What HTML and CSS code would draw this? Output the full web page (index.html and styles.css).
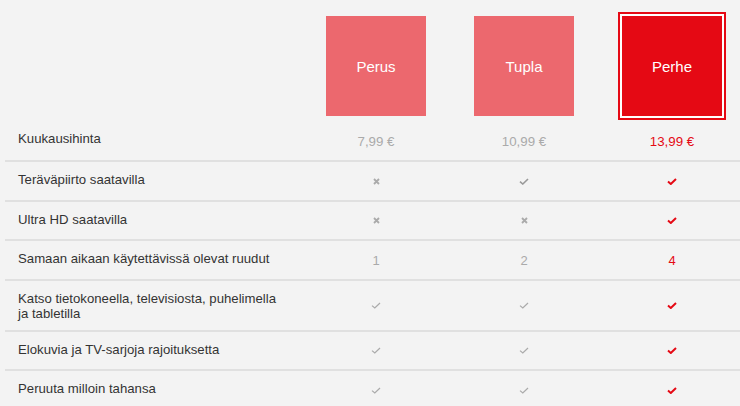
FILE: index.html
```html
<!DOCTYPE html>
<html lang="fi">
<head>
<meta charset="utf-8">
<title>Tilaukset</title>
<link rel="stylesheet" href="styles.css">
</head>
<body>
<div class="plans">
  <div class="row head">
    <div class="cell"></div>
    <div class="cell"><div class="plan">Perus</div></div>
    <div class="cell"><div class="plan">Tupla</div></div>
    <div class="cell"><div class="plan selected">Perhe</div></div>
  </div>
  <div class="row price">
    <div class="label">Kuukausihinta</div>
    <div class="val">7,99 €</div>
    <div class="val">10,99 €</div>
    <div class="val on">13,99 €</div>
  </div>
  <div class="row feature">
    <div class="label">Teräväpiirto saatavilla</div>
    <div class="val"><svg class="x" width="7" height="7" viewBox="0 0 7 7"><path d="M1 1L6 6M6 1L1 6"/></svg></div>
    <div class="val"><svg class="ck" width="10" height="7" viewBox="0 0 10 7"><path d="M1 3.6L3.8 6L9 1"/></svg></div>
    <div class="val on"><svg class="ck" width="10" height="7" viewBox="0 0 10 7"><path d="M1 3.6L3.8 6L9 1"/></svg></div>
  </div>
  <div class="row feature">
    <div class="label">Ultra HD saatavilla</div>
    <div class="val"><svg class="x" width="7" height="7" viewBox="0 0 7 7"><path d="M1 1L6 6M6 1L1 6"/></svg></div>
    <div class="val"><svg class="x" width="7" height="7" viewBox="0 0 7 7"><path d="M1 1L6 6M6 1L1 6"/></svg></div>
    <div class="val on"><svg class="ck" width="10" height="7" viewBox="0 0 10 7"><path d="M1 3.6L3.8 6L9 1"/></svg></div>
  </div>
  <div class="row feature">
    <div class="label">Samaan aikaan käytettävissä olevat ruudut</div>
    <div class="val">1</div>
    <div class="val">2</div>
    <div class="val on">4</div>
  </div>
  <div class="row feature">
    <div class="label">Katso tietokoneella, televisiosta, puhelimella ja tabletilla</div>
    <div class="val"><svg class="ck thin" width="10" height="7" viewBox="0 0 10 7"><path d="M1 3.6L3.8 6L9 1"/></svg></div>
    <div class="val"><svg class="ck thin" width="10" height="7" viewBox="0 0 10 7"><path d="M1 3.6L3.8 6L9 1"/></svg></div>
    <div class="val on"><svg class="ck" width="10" height="7" viewBox="0 0 10 7"><path d="M1 3.6L3.8 6L9 1"/></svg></div>
  </div>
  <div class="row feature">
    <div class="label">Elokuvia ja TV-sarjoja rajoituksetta</div>
    <div class="val"><svg class="ck thin" width="10" height="7" viewBox="0 0 10 7"><path d="M1 3.6L3.8 6L9 1"/></svg></div>
    <div class="val"><svg class="ck thin" width="10" height="7" viewBox="0 0 10 7"><path d="M1 3.6L3.8 6L9 1"/></svg></div>
    <div class="val on"><svg class="ck" width="10" height="7" viewBox="0 0 10 7"><path d="M1 3.6L3.8 6L9 1"/></svg></div>
  </div>
  <div class="row feature">
    <div class="label">Peruuta milloin tahansa</div>
    <div class="val"><svg class="ck thin" width="10" height="7" viewBox="0 0 10 7"><path d="M1 3.6L3.8 6L9 1"/></svg></div>
    <div class="val"><svg class="ck thin" width="10" height="7" viewBox="0 0 10 7"><path d="M1 3.6L3.8 6L9 1"/></svg></div>
    <div class="val on"><svg class="ck" width="10" height="7" viewBox="0 0 10 7"><path d="M1 3.6L3.8 6L9 1"/></svg></div>
  </div>
</div>
</body>
</html>
```
FILE: styles.css
```css
html, body {
  margin: 0;
  background: #f3f3f3;
  overflow: hidden;
}
body {
  font-family: "Liberation Sans", Arial, sans-serif;
}
.plans {
  margin-left: 5px;
  width: 741px;
}
.row {
  display: grid;
  grid-template-columns: 297px 148px 148px 148px;
}
.head {
  height: 120px;
}
.head .cell {
  display: flex;
  justify-content: center;
  padding-top: 16px;
}
.plan {
  width: 100px;
  height: 100px;
  display: flex;
  align-items: center;
  justify-content: center;
  color: #fff;
  font-size: 15px;
  background: #ec686e;
}
.plan.selected {
  background: #e50914;
  box-shadow: 0 0 0 2px #fff, 0 0 0 4px #e50914;
}
.price {
  height: 40px;
  align-items: center;
}
.price .label {
  align-self: start;
  padding-top: 11px;
}
.price .val {
  padding-top: 2px;
  font-size: 13.3px;
}
.feature {
  box-sizing: border-box;
  min-height: 39.5px;
  padding: 10px 0 9px;
  border-top: 2px solid #e0e0e0;
  align-items: center;
}
.label {
  align-self: start;
  padding-left: 13px;
  padding-right: 22px;
  color: #333;
  font-size: 13.2px;
  line-height: 15px;
}
.val {
  display: flex;
  justify-content: center;
  align-items: center;
  color: #aaa;
  font-size: 13px;
  line-height: 15px;
}
.val.on {
  color: #e50914;
}
.val svg {
  fill: none;
  stroke: currentColor;
}
.x {
  stroke: #999;
  stroke-width: 1.8;
}
.ck {
  stroke-width: 1.6;
  color: #999;
}
.ck.thin {
  stroke-width: 1.2;
  color: #aaa;
}
.on .ck {
  stroke-width: 2;
  color: #e50914;
}
```
